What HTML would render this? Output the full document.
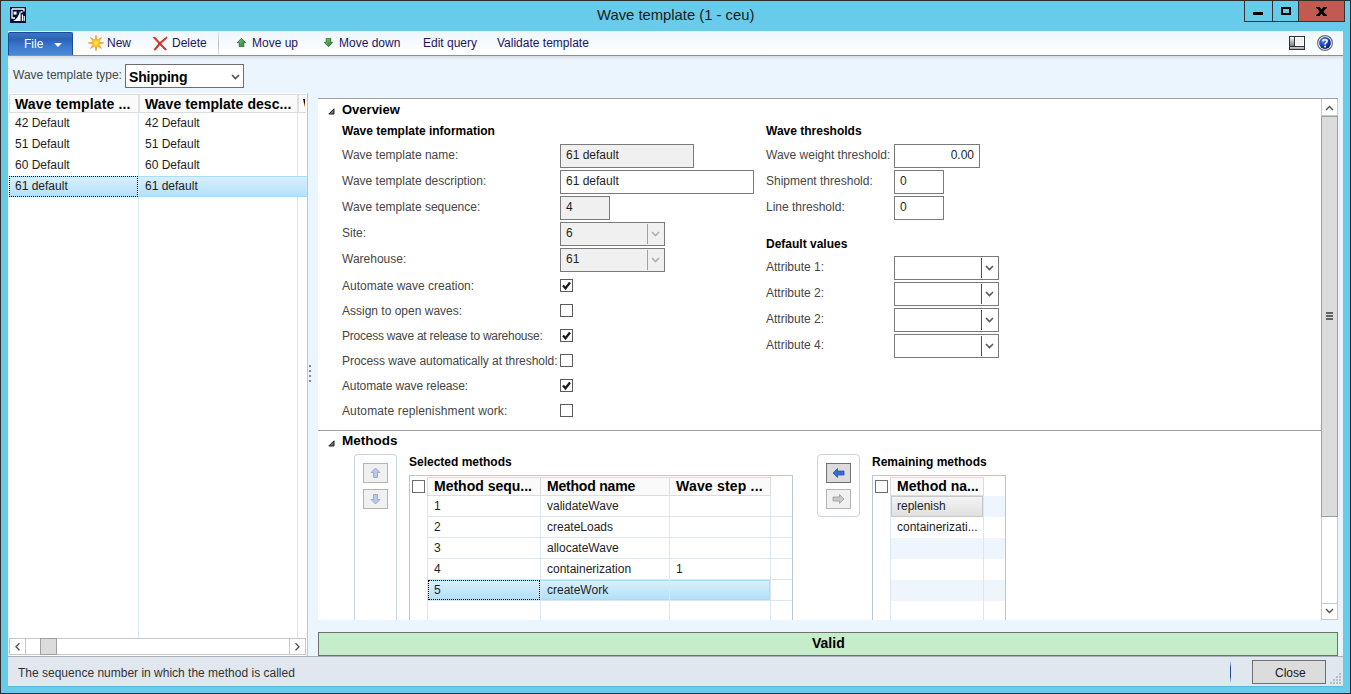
<!DOCTYPE html>
<html><head><meta charset="utf-8">
<style>
*{box-sizing:border-box;margin:0;padding:0}
html,body{width:1351px;height:694px;overflow:hidden}
body{position:relative;background:#67cbea;font-family:"Liberation Sans",sans-serif;font-size:12px;color:#1e1e1e}
.a{position:absolute}
.t{position:absolute;white-space:nowrap;line-height:14px;font-size:12px}
.b{font-weight:bold}
.lbl{color:#464646}
.fld{position:absolute;border:1px solid #7a7a7a;background:#fff;height:24px}
.ro{background:#f0f0f0}
.cb{position:absolute;width:13px;height:13px;border:1px solid #5c5c5c;background:#fff}
</style></head><body>
<!-- frame border -->
<div class="a" style="left:0;top:0;width:1351px;height:694px;border:1px solid #2e2e2e"></div>

<!-- title icon -->
<svg class="a" style="left:10px;top:7px" width="16" height="16" viewBox="0 0 16 16"><rect width="16" height="16" fill="#001038"/>
<path d="M2 2 H14 V4.5 M2 2 V11 H5" stroke="#fff" stroke-width="1.3" fill="none"/>
<rect x="3.6" y="4.6" width="3" height="3" fill="#fff"/>
<path d="M3 14 C6 12.5 8.5 10 9.8 4.5 L10.6 4.5 L10.6 14 Z" fill="#fff"/>
<rect x="11" y="4.2" width="1.5" height="1.5" fill="#fff"/>
<rect x="11.8" y="7.5" width="1.2" height="6.5" fill="#fff"/>
<rect x="13.6" y="9" width="1.2" height="5" fill="#fff"/></svg>
<!-- title -->
<div class="t" style="left:597px;top:6px;font-size:14.8px;line-height:18px;color:#1a1a1a">Wave template (1 - ceu)</div>

<!-- window buttons -->
<div class="a" style="left:1244px;top:1px;width:101px;height:21px;border:1px solid #333;border-top:none;background:#67cbea"></div>
<div class="a" style="left:1272px;top:1px;width:1px;height:20px;background:#333"></div>
<div class="a" style="left:1298px;top:1px;width:47px;height:21px;border:1px solid #333;border-top:none;background:#c15a50"></div>
<div class="a" style="left:1253px;top:12px;width:10px;height:3px;background:#000"></div>
<div class="a" style="left:1281px;top:7px;width:10px;height:8px;border:2px solid #000"></div>
<svg class="a" style="left:1316px;top:7px" width="11" height="9" viewBox="0 0 11 9"><path d="M1.2 -0.5 L9.8 9.5 M9.8 -0.5 L1.2 9.5" stroke="#000" stroke-width="2.7"/><rect x="0" y="0" width="3.2" height="1.2" fill="#000"/><rect x="7.8" y="0" width="3.2" height="1.2" fill="#000"/><rect x="0" y="7.8" width="3.2" height="1.2" fill="#000"/><rect x="7.8" y="7.8" width="3.2" height="1.2" fill="#000"/></svg>

<!-- client area -->
<div class="a" style="left:8px;top:31px;width:1335px;height:655px;background:#ebf5fd"></div>

<!-- toolbar -->
<div class="a" style="left:8px;top:31px;width:1335px;height:25px;background:linear-gradient(#edf6fc,#ffffff);border-bottom:1px solid #8a9098"></div>
<div class="a" style="left:8px;top:56px;width:1335px;height:4px;background:linear-gradient(#d9dde1,#ebf5fd)"></div>


<!-- toolbar items -->
<div class="a" style="left:8px;top:32px;width:65px;height:23px;border:1px solid #1f4a9a;border-bottom:none;border-radius:2px 2px 0 0;background:linear-gradient(#3a74c6,#2c62b4 30%,#3a7ace 60%,#4a8ad9)"></div>
<div class="t" style="left:24px;top:37px;color:#fff;font-size:12px">File</div>
<svg class="a" style="left:54px;top:43px" width="8" height="4" viewBox="0 0 8 4"><path d="M0 0 H8 L4 4 Z" fill="#fff"/></svg>

<svg class="a" style="left:88px;top:35px" width="16" height="16" viewBox="0 0 16 16">
<defs><radialGradient id="sg" cx="50%" cy="50%" r="50%"><stop offset="0" stop-color="#fff070"/><stop offset="0.45" stop-color="#ffc020"/><stop offset="1" stop-color="#e88a00"/></radialGradient></defs>
<polygon points="8.00,0.10 9.15,5.23 13.59,2.41 10.77,6.85 15.90,8.00 10.77,9.15 13.59,13.59 9.15,10.77 8.00,15.90 6.85,10.77 2.41,13.59 5.23,9.15 0.10,8.00 5.23,6.85 2.41,2.41 6.85,5.23" fill="url(#sg)" stroke="#e89000" stroke-width="0.5" stroke-linejoin="round"/></svg>
<div class="t" style="left:107px;top:36px;color:#1a1660">New</div>

<svg class="a" style="left:152px;top:36px" width="16" height="15" viewBox="0 0 16 15">
<path d="M1.2 1.5 Q2.5 0.6 3.6 1.8 Q8 7 14.6 13.6 Q13.5 14.4 12.6 13.6 Q7 8 1.2 1.5 Z" fill="#d83a2a" stroke="#b02018" stroke-width="0.6"/>
<path d="M14.8 0.8 Q15.4 1.8 14.2 2.8 Q8.5 7 3.8 13.8 Q2.6 14.8 2 13.6 Q6.5 6.5 14.8 0.8 Z" fill="#d83a2a" stroke="#b02018" stroke-width="0.6"/></svg>
<div class="t" style="left:172px;top:36px;color:#1a1660">Delete</div>

<div class="a" style="left:218px;top:32px;width:1px;height:23px;background:linear-gradient(#e0e4e8,#b8bec4,#e0e4e8)"></div>

<svg class="a" style="left:237px;top:38px" width="9" height="9" viewBox="0 0 9 9">
<defs><linearGradient id="ga" x1="0" y1="0" x2="1" y2="1"><stop offset="0" stop-color="#7cc87c"/><stop offset="1" stop-color="#2a7a2a"/></linearGradient></defs>
<path d="M4.5 0.3 L8.8 4.7 L6.8 4.7 L6.8 8.8 L2.2 8.8 L2.2 4.7 L0.2 4.7 Z" fill="url(#ga)" stroke="#1f5f1f" stroke-width="0.7" stroke-linejoin="round"/></svg>
<div class="t" style="left:252px;top:36px;color:#1a1660">Move up</div>

<svg class="a" style="left:324px;top:38px" width="9" height="9" viewBox="0 0 9 9">
<path d="M4.5 8.7 L8.8 4.3 L6.8 4.3 L6.8 0.2 L2.2 0.2 L2.2 4.3 L0.2 4.3 Z" fill="url(#ga)" stroke="#1f5f1f" stroke-width="0.7" stroke-linejoin="round"/></svg>
<div class="t" style="left:339px;top:36px;color:#1a1660">Move down</div>

<div class="t" style="left:423px;top:36px;color:#1a1660">Edit query</div>
<div class="t" style="left:497px;top:36px;color:#1a1660">Validate template</div>

<svg class="a" style="left:1289px;top:36px" width="16" height="14" viewBox="0 0 16 14" shape-rendering="crispEdges">
<defs><linearGradient id="lg1" x1="0" y1="0" x2="0" y2="1"><stop offset="0" stop-color="#f8f8f8"/><stop offset="1" stop-color="#7a7e82"/></linearGradient>
<linearGradient id="lg2" x1="0" y1="0" x2="0" y2="1"><stop offset="0" stop-color="#d0d4d8"/><stop offset="1" stop-color="#9a9ea2"/></linearGradient></defs>
<rect x="0" y="0" width="16" height="14" fill="#2e3236"/>
<rect x="1" y="1" width="4" height="9" fill="url(#lg1)"/>
<rect x="6" y="1" width="9" height="9" fill="#fff"/>
<rect x="7" y="2" width="7" height="7" fill="#f0f0f0"/>
<rect x="1" y="11" width="14" height="2" fill="url(#lg2)"/></svg>

<svg class="a" style="left:1317px;top:35px" width="16" height="16" viewBox="0 0 16 16">
<defs><radialGradient id="hg" cx="35%" cy="30%" r="70%"><stop offset="0" stop-color="#5a8af0"/><stop offset="0.6" stop-color="#1a40b8"/><stop offset="1" stop-color="#0a2080"/></radialGradient></defs>
<circle cx="8" cy="8" r="7.4" fill="#fff" stroke="#6e6e6e" stroke-width="1.2"/><circle cx="8" cy="8" r="5.9" fill="url(#hg)"/>
<path d="M6 6.2 C6 4.1 10.1 4.1 10.1 6.2 C10.1 7.8 8.1 7.6 8.1 9.6" stroke="#f4f4f4" stroke-width="1.7" fill="none"/><rect x="7.2" y="10.6" width="1.8" height="1.8" fill="#f4f4f4"/></svg>


<!-- wave template type -->
<div class="t lbl" style="left:13px;top:68px">Wave template type:</div>
<div class="a" style="left:125px;top:64px;width:119px;height:24px;border:1px solid #6e6e6e;background:#fff"></div>
<div class="t b" style="left:129px;top:70px;font-size:14px;color:#000;letter-spacing:-0.2px">Shipping</div>
<svg class="a" style="left:231px;top:74px" width="9" height="6" viewBox="0 0 9 6"><path d="M1 1 L4.5 4.5 L8 1" stroke="#505050" stroke-width="1.6" fill="none"/></svg>

<!-- left grid -->
<div class="a" style="left:9px;top:93px;width:299px;height:563px;background:#fff;border-right:1px solid #b8c8dc"></div>
<div class="a" style="left:9px;top:94px;width:297px;height:19px;background:#fafafa;border-top:1px solid #dcdcdc;border-bottom:1px solid #dcdcdc"></div>
<div class="a" style="left:9px;top:94px;width:1px;height:19px;background:#dcdcdc"></div>
<div class="a" style="left:138px;top:95px;width:2px;height:17px;background:#e0e0e0"></div>
<div class="a" style="left:297px;top:95px;width:2px;height:17px;background:#e0e0e0"></div>
<div class="t b" style="left:15px;top:97px;font-size:14px;color:#000;letter-spacing:0.15px">Wave template ...</div>
<div class="t b" style="left:145px;top:97px;font-size:14px;color:#000;letter-spacing:0.07px">Wave template desc...</div>
<div class="a" style="left:303px;top:99px;width:2px;height:8px;overflow:hidden"><div class="t b" style="left:0;top:-2px;font-size:13px;color:#000">W</div></div>
<!-- body col lines -->
<div class="a" style="left:138px;top:113px;width:1px;height:525px;background:#dbe6f3"></div>
<div class="a" style="left:297px;top:113px;width:1px;height:525px;background:#dbe6f3"></div>
<!-- rows -->
<div class="t" style="left:15px;top:116px">42 Default</div><div class="t" style="left:145px;top:116px">42 Default</div>
<div class="t" style="left:15px;top:137px">51 Default</div><div class="t" style="left:145px;top:137px">51 Default</div>
<div class="t" style="left:15px;top:158px">60 Default</div><div class="t" style="left:145px;top:158px">60 Default</div>
<div class="a" style="left:9px;top:176px;width:298px;height:21px;background:linear-gradient(#d9effc,#b3e1f8);border-top:1px solid #a8ddf8;border-bottom:1px solid #a8ddf8"></div>
<div class="a" style="left:138px;top:177px;width:1px;height:19px;background:#d8ecf8"></div>
<div class="a" style="left:9px;top:176px;width:129px;height:21px;border:1px dotted #000"></div>
<div class="t" style="left:15px;top:179px">61 default</div><div class="t" style="left:145px;top:179px">61 default</div>
<!-- h scrollbar -->
<div class="a" style="left:9px;top:638px;width:297px;height:17px;background:#fff;border:1px solid #c8c8c8"></div>
<div class="a" style="left:25px;top:639px;width:1px;height:15px;background:#c8c8c8"></div>
<div class="a" style="left:289px;top:639px;width:1px;height:15px;background:#c8c8c8"></div>
<div class="a" style="left:40px;top:638px;width:17px;height:17px;background:#dcdcdc;border:1px solid #a0a0a0"></div>
<svg class="a" style="left:14px;top:642px" width="7" height="10" viewBox="0 0 7 10"><path d="M5.5 1.3 L2 4.8 L5.5 8.3" stroke="#505050" stroke-width="1.3" fill="none"/></svg>
<svg class="a" style="left:294px;top:642px" width="7" height="10" viewBox="0 0 7 10"><path d="M1.5 1.3 L5 4.8 L1.5 8.3" stroke="#505050" stroke-width="1.3" fill="none"/></svg>
<!-- splitter dots -->
<div class="a" style="left:309px;top:365px;width:2px;height:2px;background:#888"></div>
<div class="a" style="left:309px;top:370px;width:2px;height:2px;background:#888"></div>
<div class="a" style="left:309px;top:375px;width:2px;height:2px;background:#888"></div>
<div class="a" style="left:309px;top:380px;width:2px;height:2px;background:#888"></div>

<!-- right panel -->
<div class="a" style="left:318px;top:98px;width:1020px;height:522px;background:#fff;border-top:1px solid #a0a0a0"></div>
<svg class="a" style="left:328px;top:108px" width="7" height="7" viewBox="0 0 7 7"><path d="M0.8 6 L6 6 L6 0.8 Z" fill="#707070" stroke="#202020" stroke-width="1" stroke-linejoin="round"/></svg>
<div class="t b" style="left:342px;top:103px;font-size:13px;color:#000">Overview</div>
<div class="t b" style="left:342px;top:124px;color:#000">Wave template information</div>
<div class="t lbl" style="left:342px;top:148px">Wave template name:</div>
<div class="t lbl" style="left:342px;top:174px">Wave template description:</div>
<div class="t lbl" style="left:342px;top:200px">Wave template sequence:</div>
<div class="t lbl" style="left:342px;top:226px">Site:</div>
<div class="t lbl" style="left:342px;top:252px">Warehouse:</div>
<div class="fld" style="left:560px;top:144px;width:134px;background:#f0f0f0"></div><div class="t" style="left:566px;top:148px">61 default</div>
<div class="fld" style="left:560px;top:170px;width:194px;background:#fff"></div><div class="t" style="left:566px;top:174px">61 default</div>
<div class="fld" style="left:560px;top:196px;width:50px;background:#f0f0f0"></div><div class="t" style="left:566px;top:200px">4</div>
<div class="fld" style="left:560px;top:222px;width:105px;background:#f0f0f0"></div><div class="a" style="left:647px;top:224px;width:1px;height:20px;background:#a0a0a0"></div><svg class="a" style="left:651px;top:231px" width="9" height="6" viewBox="0 0 9 6"><path d="M1 1 L4.5 4.5 L8 1" stroke="#b0b0b0" stroke-width="1.6" fill="none"/></svg><div class="t" style="left:566px;top:226px">6</div>
<div class="fld" style="left:560px;top:248px;width:105px;background:#f0f0f0"></div><div class="a" style="left:647px;top:250px;width:1px;height:20px;background:#a0a0a0"></div><svg class="a" style="left:651px;top:257px" width="9" height="6" viewBox="0 0 9 6"><path d="M1 1 L4.5 4.5 L8 1" stroke="#b0b0b0" stroke-width="1.6" fill="none"/></svg><div class="t" style="left:566px;top:252px">61</div>
<div class="t lbl" style="left:342px;top:279px">Automate wave creation:</div>
<div class="cb" style="left:560px;top:279px"></div><svg class="a" style="left:562px;top:281px" width="9" height="9" viewBox="0 0 9 9"><path d="M1 4.5 L3.5 7.3 L8 1.5" stroke="#1a1a1a" stroke-width="2.3" fill="none"/></svg>
<div class="t lbl" style="left:342px;top:304px">Assign to open waves:</div>
<div class="cb" style="left:560px;top:304px"></div>
<div class="t lbl" style="left:342px;top:329px;letter-spacing:-0.24px">Process wave at release to warehouse:</div>
<div class="cb" style="left:560px;top:329px"></div><svg class="a" style="left:562px;top:331px" width="9" height="9" viewBox="0 0 9 9"><path d="M1 4.5 L3.5 7.3 L8 1.5" stroke="#1a1a1a" stroke-width="2.3" fill="none"/></svg>
<div class="t lbl" style="left:342px;top:354px;letter-spacing:-0.05px">Process wave automatically at threshold:</div>
<div class="cb" style="left:560px;top:354px"></div>
<div class="t lbl" style="left:342px;top:379px;letter-spacing:-0.13px">Automate wave release:</div>
<div class="cb" style="left:560px;top:379px"></div><svg class="a" style="left:562px;top:381px" width="9" height="9" viewBox="0 0 9 9"><path d="M1 4.5 L3.5 7.3 L8 1.5" stroke="#1a1a1a" stroke-width="2.3" fill="none"/></svg>
<div class="t lbl" style="left:342px;top:404px;letter-spacing:0.12px">Automate replenishment work:</div>
<div class="cb" style="left:560px;top:404px"></div>
<div class="t b" style="left:766px;top:124px;color:#000">Wave thresholds</div>
<div class="t lbl" style="left:766px;top:148px">Wave weight threshold:</div>
<div class="t lbl" style="left:766px;top:174px">Shipment threshold:</div>
<div class="t lbl" style="left:766px;top:200px">Line threshold:</div>
<div class="fld" style="left:894px;top:144px;width:86px;background:#fff"></div><div class="t" style="left:894px;top:148px;width:80px;text-align:right">0.00</div>
<div class="fld" style="left:894px;top:170px;width:50px;background:#fff"></div><div class="t" style="left:900px;top:174px">0</div>
<div class="fld" style="left:894px;top:196px;width:50px;background:#fff"></div><div class="t" style="left:900px;top:200px">0</div>
<div class="t b" style="left:766px;top:237px;color:#000">Default values</div>
<div class="t lbl" style="left:766px;top:260px">Attribute 1:</div>
<div class="fld" style="left:894px;top:256px;width:105px;background:#fff"></div><div class="a" style="left:981px;top:258px;width:1px;height:20px;background:#505050"></div><svg class="a" style="left:985px;top:265px" width="9" height="6" viewBox="0 0 9 6"><path d="M1 1 L4.5 4.5 L8 1" stroke="#5a5a5a" stroke-width="1.6" fill="none"/></svg>
<div class="t lbl" style="left:766px;top:286px">Attribute 2:</div>
<div class="fld" style="left:894px;top:282px;width:105px;background:#fff"></div><div class="a" style="left:981px;top:284px;width:1px;height:20px;background:#505050"></div><svg class="a" style="left:985px;top:291px" width="9" height="6" viewBox="0 0 9 6"><path d="M1 1 L4.5 4.5 L8 1" stroke="#5a5a5a" stroke-width="1.6" fill="none"/></svg>
<div class="t lbl" style="left:766px;top:312px">Attribute 2:</div>
<div class="fld" style="left:894px;top:308px;width:105px;background:#fff"></div><div class="a" style="left:981px;top:310px;width:1px;height:20px;background:#505050"></div><svg class="a" style="left:985px;top:317px" width="9" height="6" viewBox="0 0 9 6"><path d="M1 1 L4.5 4.5 L8 1" stroke="#5a5a5a" stroke-width="1.6" fill="none"/></svg>
<div class="t lbl" style="left:766px;top:338px">Attribute 4:</div>
<div class="fld" style="left:894px;top:334px;width:105px;background:#fff"></div><div class="a" style="left:981px;top:336px;width:1px;height:20px;background:#505050"></div><svg class="a" style="left:985px;top:343px" width="9" height="6" viewBox="0 0 9 6"><path d="M1 1 L4.5 4.5 L8 1" stroke="#5a5a5a" stroke-width="1.6" fill="none"/></svg>
<div class="a" style="left:318px;top:430px;width:1003px;height:1px;background:#a0a0a0"></div>
<svg class="a" style="left:328px;top:440px" width="7" height="7" viewBox="0 0 7 7"><path d="M0.8 6 L6 6 L6 0.8 Z" fill="#707070" stroke="#202020" stroke-width="1" stroke-linejoin="round"/></svg>
<div class="t b" style="left:342px;top:434px;font-size:13.5px;color:#000">Methods</div>
<div class="a" style="left:1321px;top:99px;width:17px;height:521px;background:#fff;border-left:1px solid #c8c8c8;border-right:1px solid #c8c8c8"></div>
<div class="a" style="left:1321px;top:115px;width:17px;height:1px;background:#c8c8c8"></div>
<div class="a" style="left:1321px;top:603px;width:17px;height:1px;background:#c8c8c8"></div>
<div class="a" style="left:1321px;top:619px;width:17px;height:1px;background:#c8c8c8"></div>
<div class="a" style="left:1321px;top:116px;width:17px;height:401px;background:#dcdcdc;border:1px solid #a0a0a0"></div>
<div class="a" style="left:1326px;top:312px;width:7px;height:2px;background:#606060"></div>
<div class="a" style="left:1326px;top:315px;width:7px;height:2px;background:#606060"></div>
<div class="a" style="left:1326px;top:318px;width:7px;height:2px;background:#606060"></div>
<svg class="a" style="left:1325px;top:105px" width="9" height="6" viewBox="0 0 9 6"><path d="M1 5 L4.5 1.5 L8 5" stroke="#505050" stroke-width="1.4" fill="none"/></svg>
<svg class="a" style="left:1325px;top:608px" width="9" height="6" viewBox="0 0 9 6"><path d="M1 1 L4.5 4.5 L8 1" stroke="#505050" stroke-width="1.4" fill="none"/></svg>
<div class="a" style="left:318px;top:632px;width:1020px;height:24px;background:#c5edc9;border:1px solid #707070"></div>
<div class="t b" style="left:812px;top:636px;font-size:14px;color:#000;letter-spacing:0px">Valid</div>
<!-- methods content -->
<div class="a" style="left:354px;top:454px;width:43px;height:166px;border:1px solid #c9d6e3;border-bottom:none;border-radius:4px 4px 0 0;background:#fff"></div>
<div class="a" style="left:363px;top:463px;width:25px;height:20px;background:#f0f0f0;border:1px solid #b4b4b4"></div><svg class="a" style="left:369px;top:467px" width="13" height="12" viewBox="0 0 13 12"><path d="M6.5 1 L11 5.5 L8.5 5.5 L8.5 10.5 L4.5 10.5 L4.5 5.5 L2 5.5 Z" fill="#b8c8e8" stroke="#8aa0c8" stroke-width="0.8"/></svg>
<div class="a" style="left:363px;top:489px;width:25px;height:20px;background:#f0f0f0;border:1px solid #b4b4b4"></div><svg class="a" style="left:369px;top:493px" width="13" height="12" viewBox="0 0 13 12"><path d="M6.5 11 L11 6.5 L8.5 6.5 L8.5 1.5 L4.5 1.5 L4.5 6.5 L2 6.5 Z" fill="#b8c8e8" stroke="#8aa0c8" stroke-width="0.8"/></svg>
<div class="t b" style="left:409px;top:455px;color:#000">Selected methods</div>
<div class="a" style="left:409px;top:475px;width:384px;height:145px;background:#fff;border:1px solid #b4c8dc;border-bottom:none"></div>
<div class="cb" style="left:412px;top:480px;border-color:#6e6e6e"></div>
<div class="a" style="left:427px;top:477px;width:344px;height:19px;background:#fafafa;border:1px solid #dcdcdc"></div>
<div class="a" style="left:540px;top:478px;width:1px;height:17px;background:#dcdcdc"></div>
<div class="a" style="left:669px;top:478px;width:1px;height:17px;background:#dcdcdc"></div>
<div class="t b" style="left:434px;top:479px;font-size:14px;color:#000;letter-spacing:0px">Method sequ...</div>
<div class="t b" style="left:547px;top:479px;font-size:14px;color:#000;letter-spacing:-0.2px">Method name</div>
<div class="t b" style="left:676px;top:479px;font-size:14px;color:#000;letter-spacing:0.2px">Wave step ...</div>
<div class="a" style="left:428px;top:580px;width:342px;height:20px;background:linear-gradient(#d9effc,#b3e1f8);border-top:1px solid #a8ddf8;border-bottom:1px solid #a8ddf8;border-right:1px solid #a8ddf8"></div>
<div class="a" style="left:427px;top:496px;width:1px;height:124px;background:#dbe6f3"></div>
<div class="a" style="left:540px;top:496px;width:1px;height:124px;background:#dbe6f3"></div>
<div class="a" style="left:669px;top:496px;width:1px;height:124px;background:#dbe6f3"></div>
<div class="a" style="left:770px;top:496px;width:1px;height:124px;background:#dbe6f3"></div>
<div class="a" style="left:427px;top:516px;width:365px;height:1px;background:#dbe6f3"></div>
<div class="a" style="left:427px;top:537px;width:365px;height:1px;background:#dbe6f3"></div>
<div class="a" style="left:427px;top:558px;width:365px;height:1px;background:#dbe6f3"></div>
<div class="a" style="left:427px;top:579px;width:365px;height:1px;background:#dbe6f3"></div>
<div class="a" style="left:427px;top:600px;width:365px;height:1px;background:#dbe6f3"></div>
<div class="a" style="left:428px;top:580px;width:112px;height:20px;border:1px dotted #000"></div>
<div class="t" style="left:434px;top:499px">1</div><div class="t" style="left:547px;top:499px">validateWave</div>
<div class="t" style="left:434px;top:520px">2</div><div class="t" style="left:547px;top:520px">createLoads</div>
<div class="t" style="left:434px;top:541px">3</div><div class="t" style="left:547px;top:541px">allocateWave</div>
<div class="t" style="left:434px;top:562px">4</div><div class="t" style="left:547px;top:562px">containerization</div>
<div class="t" style="left:676px;top:562px">1</div>
<div class="t" style="left:434px;top:583px">5</div><div class="t" style="left:547px;top:583px">createWork</div>
<div class="a" style="left:817px;top:454px;width:43px;height:63px;border:1px solid #c9d6e3;border-radius:4px;background:#fff"></div>
<div class="a" style="left:826px;top:463px;width:25px;height:20px;background:#dcdcdc;border:1px solid #707070"></div><svg class="a" style="left:832px;top:467px" width="13" height="12" viewBox="0 0 13 12"><path d="M1 6 L5.5 1.5 L5.5 4 L12 4 L12 8 L5.5 8 L5.5 10.5 Z" fill="#3a6ad8" stroke="#2a4fa8" stroke-width="0.8"/></svg>
<div class="a" style="left:826px;top:489px;width:25px;height:20px;background:#f0f0f0;border:1px solid #b4b4b4"></div><svg class="a" style="left:832px;top:493px" width="13" height="12" viewBox="0 0 13 12"><path d="M12 6 L7.5 1.5 L7.5 4 L1 4 L1 8 L7.5 8 L7.5 10.5 Z" fill="#c8c8c8" stroke="#9a9a9a" stroke-width="0.8"/></svg>
<div class="t b" style="left:872px;top:455px;color:#000">Remaining methods</div>
<div class="a" style="left:872px;top:475px;width:134px;height:145px;background:#fff;border:1px solid #b4c8dc;border-bottom:none"></div>
<div class="a" style="left:891px;top:538px;width:114px;height:21px;background:#eff5fc"></div>
<div class="a" style="left:891px;top:580px;width:114px;height:21px;background:#eff5fc"></div>
<div class="a" style="left:891px;top:496px;width:114px;height:21px;background:#eff5fc"></div>
<div class="cb" style="left:875px;top:480px;border-color:#6e6e6e"></div>
<div class="a" style="left:890px;top:477px;width:94px;height:19px;background:#fafafa;border:1px solid #dcdcdc"></div>
<div class="t b" style="left:897px;top:479px;font-size:14px;color:#000;letter-spacing:0px">Method na...</div>
<div class="a" style="left:890px;top:496px;width:1px;height:124px;background:#dbe6f3"></div>
<div class="a" style="left:983px;top:496px;width:1px;height:124px;background:#dbe6f3"></div>
<div class="a" style="left:891px;top:496px;width:92px;height:21px;background:linear-gradient(#f4f4f4,#e0e0e0);border:1px solid #c8c8c8"></div>
<div class="t" style="left:897px;top:499px">replenish</div>
<div class="t" style="left:897px;top:520px">containerizati...</div>

<!-- status bar -->
<div class="a" style="left:8px;top:686px;width:1335px;height:1px;background:#5ab8d8"></div>
<div class="a" style="left:8px;top:656px;width:1335px;height:30px;background:#e0e7ef;border-top:1px solid #a8b0b8"></div>


<div class="t" style="left:18px;top:666px;color:#333">The sequence number in which the method is called</div>
<div class="a" style="left:1230px;top:661px;width:1px;height:22px;background:linear-gradient(#e0e7ef,#1a4a8a 30%,#1a4a8a 70%,#e0e7ef)"></div>
<div class="a" style="left:1252px;top:660px;width:74px;height:24px;background:#dcdcdc;border:1px solid #707070"></div>
<div class="t" style="left:1275px;top:666px;color:#1a1a1a">Close</div>
<div class="a" style="left:1339px;top:673px;width:2px;height:2px;background:#b8bec6"></div>
<div class="a" style="left:1336px;top:676px;width:2px;height:2px;background:#b8bec6"></div>
<div class="a" style="left:1339px;top:676px;width:2px;height:2px;background:#b8bec6"></div>
<div class="a" style="left:1333px;top:679px;width:2px;height:2px;background:#b8bec6"></div>
<div class="a" style="left:1336px;top:679px;width:2px;height:2px;background:#b8bec6"></div>
<div class="a" style="left:1339px;top:679px;width:2px;height:2px;background:#b8bec6"></div>
<div class="a" style="left:1330px;top:682px;width:2px;height:2px;background:#b8bec6"></div>
<div class="a" style="left:1333px;top:682px;width:2px;height:2px;background:#b8bec6"></div>
<div class="a" style="left:1336px;top:682px;width:2px;height:2px;background:#b8bec6"></div>
<div class="a" style="left:1339px;top:682px;width:2px;height:2px;background:#b8bec6"></div>
</body></html>
